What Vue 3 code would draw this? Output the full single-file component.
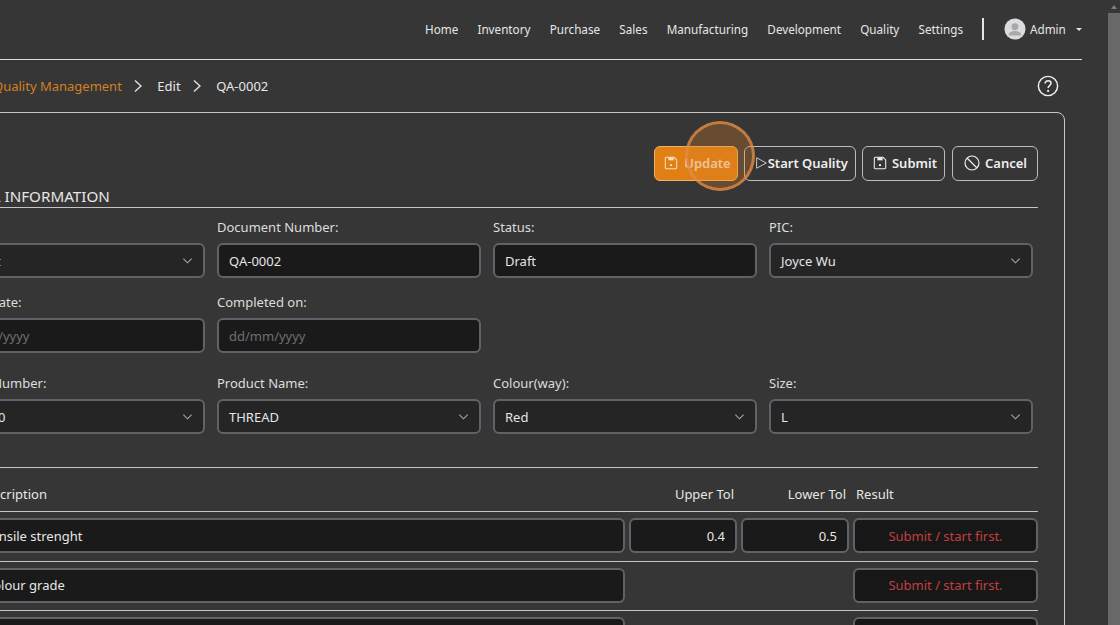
<template>
  <div class="shell">
    <div class="page">
      <header class="topbar">
        <nav class="nav">
          <a v-for="item in navItems" :key="item">{{ item }}</a>
        </nav>
        <span class="nav-divider"></span>
        <div class="user">
          <span class="avatar">
            <svg viewBox="0 0 24 24" width="22" height="22">
              <circle cx="12" cy="12" r="11.5" fill="#dcdcdf" />
              <circle cx="12" cy="9.5" r="3.8" fill="#a9a9ad" />
              <path d="M4.8 18.5c.6-3 3.6-4.2 7.2-4.2s6.6 1.2 7.2 4.2c-1.800 .8-12.600 .8-14.400 0z" fill="#a9a9ad" />
            </svg>
          </span>
          <span>Admin</span>
          <span class="caret"></span>
        </div>
      </header>

      <div class="crumbs">
        <a class="crumb-link">Quality Management</a>
        <svg class="crumb-sep" viewBox="0 0 10 14" width="10" height="14"><path d="M2 1.500l6 5.500-6 5.500" /></svg>
        <span>Edit</span>
        <svg class="crumb-sep" viewBox="0 0 10 14" width="10" height="14"><path d="M2 1.500l6 5.500-6 5.500" /></svg>
        <span>QA-0002</span>
        <svg class="help" viewBox="0 0 24 24" width="22" height="22">
          <circle cx="12" cy="12" r="10.500" />
          <path d="M8.800 9.300c.2-2 1.500-3.100 3.300-3.100 1.900 0 3.200 1.200 3.200 2.800 0 2.600-3.200 2.600-3.200 5.200" />
          <circle class="dot" cx="12.100" cy="17.400" r="1.200" />
        </svg>
      </div>

      <section class="card">
        <svg class="defs" width="0" height="0">
          <symbol id="floppy" viewBox="0 0 16 16">
            <path d="M2.500 1.500h9l3 3v9a1 1 0 0 1-1 1h-11a1 1 0 0 1-1-1v-11a1 1 0 0 1 1-1z" fill="none" stroke="currentColor" stroke-width="1.200" />
            <path d="M5 1.500h6v3.500H5z" fill="currentColor" />
            <circle cx="8" cy="10.500" r="1.300" fill="currentColor" />
          </symbol>
        </svg>

        <div class="actions">
          <button class="btn primary">
            <svg viewBox="0 0 16 16" width="14" height="14"><use href="#floppy" /></svg>
            <span>Update</span>
          </button>
          <button class="btn start">
            <svg viewBox="0 0 16 16" width="14" height="16"><path d="M3 2l11 6-11 6z" /></svg>
            <span>Start Quality</span>
          </button>
          <button class="btn submit">
            <svg viewBox="0 0 16 16" width="14" height="14"><use href="#floppy" /></svg>
            <span>Submit</span>
          </button>
          <button class="btn cancel">
            <svg viewBox="0 0 16 16" width="16" height="16"><circle cx="8" cy="8" r="7" /><path d="M3 3l10 10" /></svg>
            <span>Cancel</span>
          </button>
        </div>

        <h2 class="section-title">GENERAL INFORMATION</h2>

        <div class="fields">
          <div v-for="field in fields" :key="field.label" class="field" :class="field.cls">
            <label>{{ field.label }}</label>
            <div class="control" :class="{ muted: field.placeholder, select: field.select }">
              <span>{{ field.value }}</span>
              <svg v-if="field.select" class="chev" viewBox="0 0 12 8" width="11" height="8"><path d="M1.500 1.500l4.500 4.500 4.500-4.500" /></svg>
            </div>
          </div>
        </div>

        <div class="table">
          <div class="tr head">
            <span>Description</span>
            <span class="num">Upper Tol</span>
            <span class="num">Lower Tol</span>
            <span class="res-head">Result</span>
          </div>
          <div v-for="row in rows" :key="row.name" class="tr">
            <div class="control" :class="{ wide: !row.upper }">{{ row.name }}</div>
            <div v-if="row.upper" class="control right">{{ row.upper }}</div>
            <div v-if="row.lower" class="control right">{{ row.lower }}</div>
            <div class="control result">Submit / start first.</div>
          </div>
        </div>
      </section>
    </div>

    <div class="scrollbar">
      <span class="arrow"></span>
      <span class="thumb"></span>
    </div>
  </div>

  <div class="focus-ring"></div>
</template>

<script setup>
const navItems = ['Home', 'Inventory', 'Purchase', 'Sales', 'Manufacturing', 'Development', 'Quality', 'Settings']

const fields = [
  { label: 'Type:', value: 'Product', select: true },
  { label: 'Document Number:', value: 'QA-0002' },
  { label: 'Status:', value: 'Draft' },
  { label: 'PIC:', value: 'Joyce Wu', select: true },
  { label: 'Inspect Date:', value: 'dd/mm/yyyy', placeholder: true },
  { label: 'Completed on:', value: 'dd/mm/yyyy', placeholder: true },
  { label: 'Product Number:', value: 'P000000', select: true, cls: 'last-row' },
  { label: 'Product Name:', value: 'THREAD', select: true, cls: 'last-row' },
  { label: 'Colour(way):', value: 'Red', select: true, cls: 'last-row' },
  { label: 'Size:', value: 'L', select: true, cls: 'last-row' }
]

const rows = [
  { name: 'Tensile strenght', upper: '0.4', lower: '0.5' },
  { name: 'Colour grade' },
  { name: 'Shrinkage' }
]
</script>

<style>
html,
body {
  margin: 0;
  background: #363636;
  overflow: hidden;
}
</style>

<style scoped>
.shell {
  width: 1120px;
  height: 625px;
  display: flex;
  overflow: hidden;
  background: #363636;
  color: #e6e6e6;
  font-family: "Noto Sans", "Open Sans", sans-serif;
  font-size: 13px;
}

.page {
  flex: none;
  width: 1108px;
  height: 625px;
  overflow: hidden;
}

/* the page is scrolled sideways, so everything starts left of the window */
.topbar {
  margin-left: -100px;
  width: 1182px;
  height: 58px;
  padding-bottom: 1px;
  border-bottom: 1px solid #dddddd;
  display: flex;
  align-items: center;
  justify-content: flex-end;
  font-size: 11.700px;
}

.nav {
  display: flex;
  gap: 19.200px;
}

.nav-divider {
  width: 2px;
  height: 22px;
  background: #e4e4e4;
  margin: 0 20px 0 19px;
}

.user {
  flex: none;
  display: flex;
  align-items: center;
  gap: 4px;
  width: 78px;
}

.avatar {
  display: flex;
  width: 22px;
  height: 22px;
}

.caret {
  margin-left: 6px;
  border: 3.500px solid transparent;
  border-top-color: #e6e6e6;
  border-bottom: 0;
}

.crumbs {
  height: 52px;
  display: flex;
  align-items: center;
  margin-left: -7px;
  width: 1066px;
}

.crumb-link {
  color: #d2801f;
}

.crumb-sep {
  margin: 0 14px 0 11.500px;
  fill: none;
  stroke: #e6e6e6;
  stroke-width: 1.300;
}

.help {
  margin-left: auto;
  fill: none;
  stroke: #f0f0f0;
  stroke-width: 1.600;
}

.help .dot {
  fill: #f0f0f0;
  stroke: none;
}

.card {
  margin-left: -100px;
  width: 1165px;
  height: 560px;
  border: 1px solid #c8c8c8;
  border-radius: 8px;
  padding: 33px 26px 0;
  box-sizing: border-box;
}

.actions {
  display: flex;
  justify-content: flex-end;
  align-items: flex-start;
  gap: 6px;
  height: 36px;
}

.btn {
  height: 35px;
  display: flex;
  align-items: center;
  gap: 5px;
  padding: 0 7px 1px 10px;
  border: 1px solid #bdbdbd;
  border-radius: 6px;
  background: transparent;
  color: #eeeeee;
  font-family: inherit;
  font-size: 13px;
  font-weight: 600;
}

.btn svg {
  flex: none;
}

.btn.primary {
  background: #e07f14;
  border-color: #edb36b;
  color: #f8dfc0;
  gap: 6px;
  padding: 0 6px 1px 9px;
}

.btn.start {
  gap: 0;
  padding: 0 7px 1px 9px;
}

.btn.start svg {
  fill: none;
  stroke: #dddddd;
  stroke-width: 1;
}

.btn.cancel {
  margin-left: 1px;
  padding: 0 10px 1px 11px;
}

.btn.cancel svg {
  fill: none;
  stroke: #eeeeee;
  stroke-width: 1.200;
}

.defs {
  position: absolute;
}

.section-title {
  margin: 5px 0 0;
  padding-left: 7px;
  height: 20px;
  line-height: 18px;
  font-size: 15.200px;
  font-weight: 400;
  color: #e6e6e6;
  border-bottom: 1px solid #c4c4c4;
}

.fields {
  display: grid;
  grid-template-columns: repeat(4, 264px);
  column-gap: 12px;
  padding: 9px 0 0 14px;
}

.field {
  display: flex;
  flex-direction: column;
  height: 75px;
}

.field.last-row {
  margin-top: 6px;
  height: 94px;
}

.field:nth-child(5) {
  grid-column: 1;
}

.field:nth-child(6) {
  grid-column: 2 / 5;
  width: 264px;
}

.field label {
  height: 20px;
  line-height: 20px;
  margin-bottom: 6px;
  color: #dddddd;
}

.control {
  height: 35px;
  box-sizing: border-box;
  display: flex;
  align-items: center;
  justify-content: space-between;
  padding: 0 10px;
  background: #1a1a1a;
  border: 2px solid #5f6369;
  border-radius: 6px;
  color: #e6e6e6;
}

.control.select {
  background: #252525;
}

.control.muted {
  color: #6d6f73;
}

.chev {
  fill: none;
  stroke: #a6a6a6;
  stroke-width: 1.200;
}

.table {
  border-top: 1px solid #c4c4c4;
}

.tr {
  display: grid;
  grid-template-columns: 1fr 108px 108px 185px;
  column-gap: 4px;
  align-items: start;
  height: 49.500px;
  box-sizing: border-box;
  border-bottom: 1px solid #c4c4c4;
  padding: 6px 0 0 46px;
}

.tr.head {
  height: 44px;
  padding: 17px 0 0 50px;
}

.num {
  text-align: right;
  padding-right: 3px;
}

.res-head {
  padding-left: 3px;
}

.control.right {
  justify-content: flex-end;
}

.control.wide {
  grid-column: 1;
}

.control.result {
  grid-column: 4;
  justify-content: center;
  color: #c04040;
  background: #171717;
}

.scrollbar {
  flex: none;
  width: 12px;
  height: 625px;
  display: flex;
  flex-direction: column;
  align-items: center;
}

.arrow {
  margin-top: 5px;
  border: 3px solid transparent;
  border-bottom: 4px solid #7d7d7d;
  border-top: 0;
}

.thumb {
  margin-top: 4px;
  width: 100%;
  flex: 1;
  background: #686868;
}

.focus-ring {
  position: absolute;
  left: 685px;
  top: 121px;
  width: 70px;
  height: 70px;
  box-sizing: border-box;
  border: 3px solid rgba(225, 140, 70, 0.75);
  border-radius: 50%;
  background: rgba(222, 130, 40, 0.3);
}
</style>
